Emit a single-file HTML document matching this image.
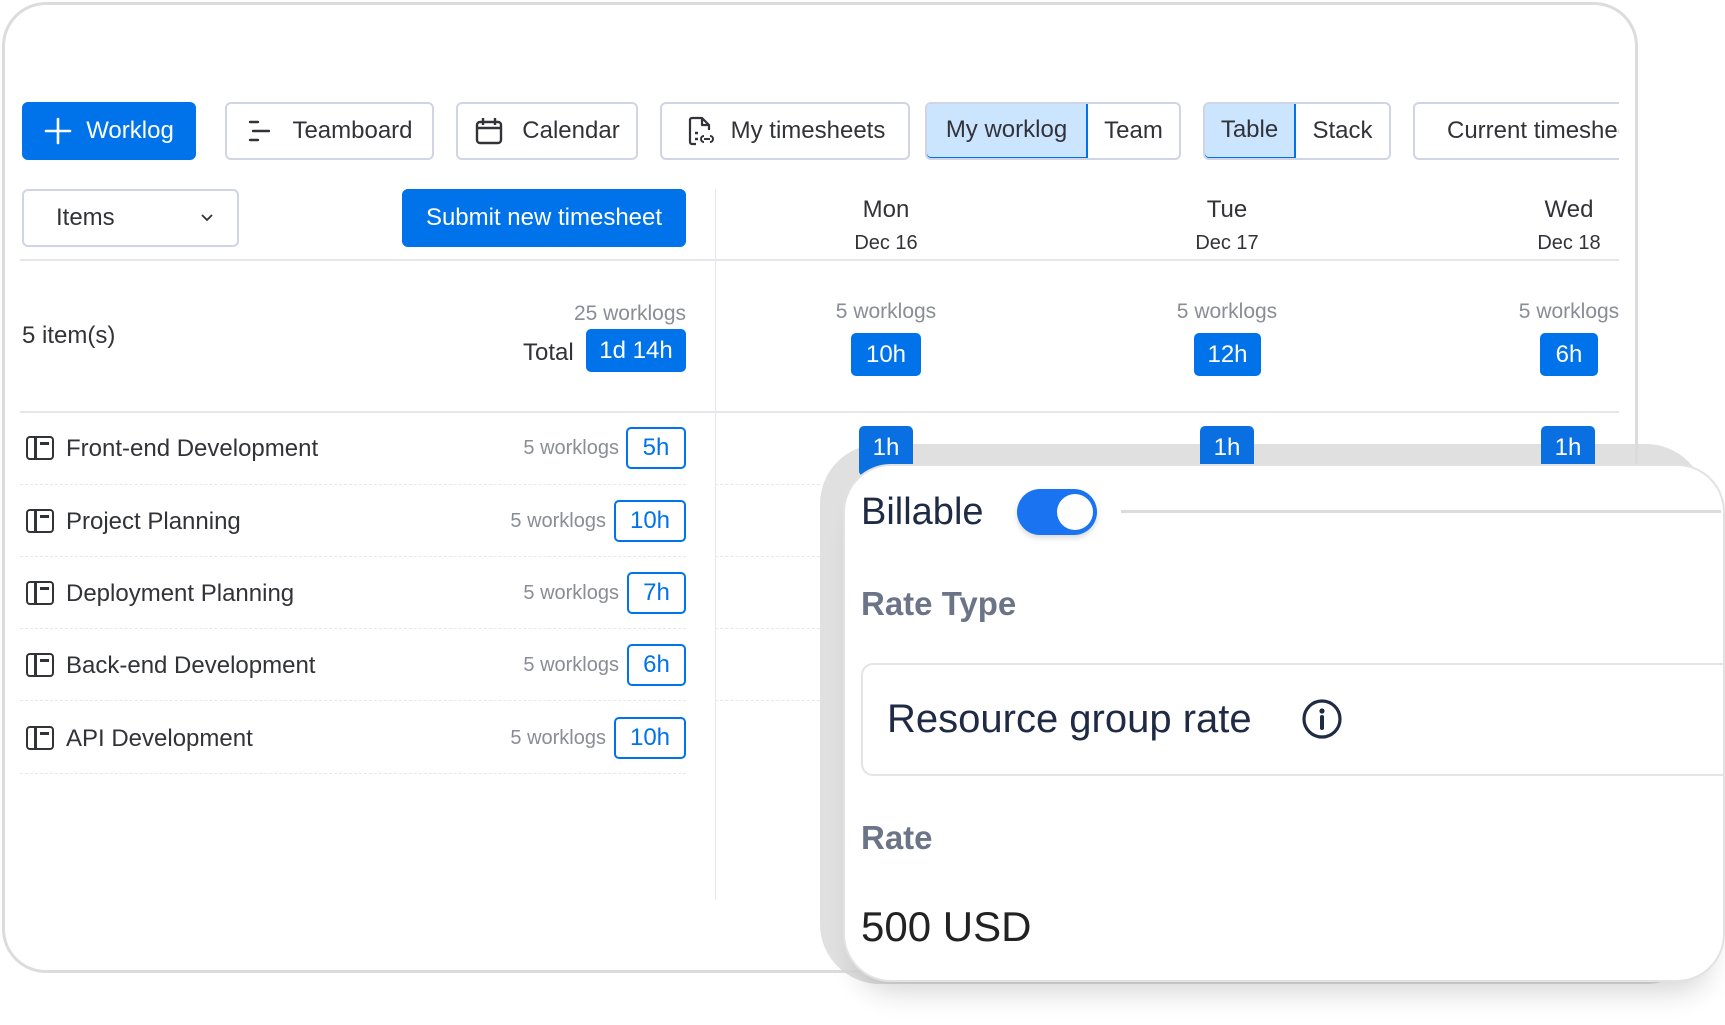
<!DOCTYPE html>
<html><head><meta charset="utf-8">
<style>
*{box-sizing:border-box;margin:0;padding:0}
body{width:1725px;height:1025px;background:#fff;position:relative;overflow:hidden;font-family:"Liberation Sans",sans-serif;color:#323338}
.a{position:absolute}
.card{left:2px;top:2px;width:1636px;height:971px;border:3px solid #dcdcdc;border-radius:44px;background:#fff}
.btn{position:absolute;top:102px;height:58px;border:2px solid #d0d4e4;border-radius:6px;background:#fff;font-size:24px;display:flex;align-items:center;justify-content:center;gap:14px;color:#323338}
.blue{background:#0073ea;border-color:#0073ea;color:#fff}
.sel{background:#cce5ff;border-color:#0073ea}
.t{position:absolute;white-space:nowrap}
.c{transform:translateX(-50%);text-align:center}
.bd{position:absolute;background:#0073ea;color:#fff;border-radius:5px;font-size:24px;display:flex;align-items:center;justify-content:center}
.ob{position:absolute;border:2px solid #0073ea;color:#0073ea;border-radius:5px;font-size:24px;display:flex;align-items:center;justify-content:center;background:#fff;height:42px}
.gray{color:#8a8d96;font-size:20px}
.row{position:absolute;left:20px;width:666px;height:0;border-top:1px dashed #e6e7ec}
.row2{position:absolute;left:715px;width:105px;height:0;border-top:1px dashed #e6e7ec}
.name{position:absolute;left:66px;font-size:24px}
.ico{position:absolute;left:26px;width:28px;height:24px;border:2.5px solid #323338;border-radius:4px}
.ico:before{content:"";position:absolute;left:6px;top:0;bottom:0;width:2.5px;background:#323338}
.ico:after{content:"";position:absolute;left:12px;top:4px;width:9px;height:3px;background:#323338}
</style></head><body>
<div class="a card"></div>

<div class="btn blue" style="left:22px;width:174px"><svg width="28" height="28" viewBox="0 0 28 28"><path d="M14 2v24M2 14h24" stroke="#fff" stroke-width="2.6" stroke-linecap="round"/></svg>Worklog</div>
<div class="btn" style="left:225px;width:209px"><svg width="26" height="26" viewBox="0 0 26 26"><path d="M4 4h8M7 13h16M4 22h8" stroke="#323338" stroke-width="2.4" stroke-linecap="round"/></svg><span style="margin-left:6px">Teamboard</span></div>
<div class="btn" style="left:456px;width:182px"><svg width="30" height="30" viewBox="0 0 30 30"><rect x="3" y="6" width="24" height="21" rx="3" fill="none" stroke="#323338" stroke-width="2.4"/><path d="M3 12h24M9 2v7M21 2v7" stroke="#323338" stroke-width="2.4"/></svg><span style="margin-left:4px">Calendar</span></div>
<div class="btn" style="left:660px;width:250px"><svg width="32" height="32" viewBox="0 0 32 32"><path d="M17 3H7a2 2 0 0 0-2 2v22a2 2 0 0 0 2 2h4M17 3l7 7h-7z M24 10v5" fill="none" stroke="#323338" stroke-width="2.2" stroke-linejoin="round"/><path d="M10 18h3M10 24h3" stroke="#323338" stroke-width="2.4"/><path d="M19 21a3 3 0 0 0 0 6M25 21a3 3 0 0 1 0 6M19 24h6" fill="none" stroke="#323338" stroke-width="2"/></svg>My timesheets</div>
<div class="btn" style="left:925px;width:256px;padding:0;justify-content:flex-start;gap:0;overflow:hidden">
 <div class="sel" style="width:163px;height:58px;margin:-2px 0 0 -2px;border:2px solid #0073ea;border-radius:6px 0 0 6px;display:flex;align-items:center;justify-content:center">My worklog</div>
 <div style="flex:1;text-align:center">Team</div></div>
<div class="btn" style="left:1203px;width:188px;padding:0;justify-content:flex-start;gap:0;overflow:hidden">
 <div class="sel" style="width:93px;height:58px;margin:-2px 0 0 -2px;border:2px solid #0073ea;border-radius:6px 0 0 6px;display:flex;align-items:center;justify-content:center">Table</div>
 <div style="flex:1;text-align:center">Stack</div></div>
<div class="btn" style="left:1413px;width:206px;justify-content:flex-start;padding-left:32px;border-right:none;border-radius:6px 0 0 6px;overflow:hidden;white-space:nowrap">Current timesheet</div>

<div class="btn" style="left:22px;top:189px;width:217px;justify-content:space-between;padding:0 22px 0 32px">Items<svg width="16" height="10" viewBox="0 0 16 10"><path d="M3 2l5 5 5-5" fill="none" stroke="#323338" stroke-width="1.8"/></svg></div>
<div class="btn blue" style="left:402px;top:189px;width:284px">Submit new timesheet</div>

<div class="a" style="left:715px;top:189px;width:1px;height:711px;background:#e6e7ec"></div>
<div class="a" style="left:20px;top:259px;width:1599px;height:2px;background:#e6e7ec"></div>
<div class="a" style="left:20px;top:411px;width:1599px;height:2px;background:#e6e7ec"></div>

<div class="t c" style="left:886px;top:196px;font-size:24px">Mon</div>
<div class="t c" style="left:886px;top:232px;font-size:20px">Dec 16</div>
<div class="t c" style="left:1227px;top:196px;font-size:24px">Tue</div>
<div class="t c" style="left:1227px;top:232px;font-size:20px">Dec 17</div>
<div class="t c" style="left:1569px;top:196px;font-size:24px">Wed</div>
<div class="t c" style="left:1569px;top:232px;font-size:20px">Dec 18</div>

<div class="t" style="left:22px;top:322px;font-size:24px">5 item(s)</div>
<div class="t gray" style="right:1039px;top:302px;font-size:21px">25 worklogs</div>
<div class="t" style="left:523px;top:339px;font-size:24px">Total</div>
<div class="bd" style="left:586px;top:329px;width:100px;height:43px">1d 14h</div>

<div class="t c gray" style="left:886px;top:300px;font-size:21px">5 worklogs</div>
<div class="bd" style="left:851px;top:333px;width:70px;height:43px">10h</div>
<div class="t c gray" style="left:1227px;top:300px;font-size:21px">5 worklogs</div>
<div class="bd" style="left:1194px;top:333px;width:67px;height:43px">12h</div>
<div class="t c gray" style="left:1569px;top:300px;font-size:21px">5 worklogs</div>
<div class="bd" style="left:1540px;top:333px;width:58px;height:43px">6h</div>

<div class="ico" style="top:436px"></div><div class="name" style="top:435px">Front-end Development</div>
<div class="t gray" style="right:1106px;top:437px">5 worklogs</div><div class="ob" style="left:626px;top:427px;width:60px">5h</div>
<div class="row" style="top:484px"></div>
<div class="ico" style="top:509px"></div><div class="name" style="top:508px">Project Planning</div>
<div class="t gray" style="right:1119px;top:510px">5 worklogs</div><div class="ob" style="left:614px;top:500px;width:72px">10h</div>
<div class="row" style="top:556px"></div>
<div class="ico" style="top:581px"></div><div class="name" style="top:580px">Deployment Planning</div>
<div class="t gray" style="right:1106px;top:582px">5 worklogs</div><div class="ob" style="left:627px;top:572px;width:59px">7h</div>
<div class="row" style="top:628px"></div>
<div class="ico" style="top:653px"></div><div class="name" style="top:652px">Back-end Development</div>
<div class="t gray" style="right:1106px;top:654px">5 worklogs</div><div class="ob" style="left:627px;top:644px;width:59px">6h</div>
<div class="row" style="top:700px"></div>
<div class="ico" style="top:726px"></div><div class="name" style="top:725px">API Development</div>
<div class="t gray" style="right:1119px;top:727px">5 worklogs</div><div class="ob" style="left:614px;top:717px;width:72px">10h</div>
<div class="row" style="top:773px"></div>
<div class="row2" style="top:484px"></div><div class="row2" style="top:556px"></div><div class="row2" style="top:628px"></div><div class="row2" style="top:700px"></div>

<!-- popup -->
<div class="a" style="left:820px;top:444px;width:886px;height:540px;background:rgba(218,218,218,.85);border-radius:60px"></div>
<div class="bd" style="left:859px;top:426px;width:54px;height:50px;align-items:flex-start;padding-top:8px;background:#0a6fe0">1h</div>
<div class="bd" style="left:1200px;top:426px;width:54px;height:50px;align-items:flex-start;padding-top:8px;background:#0a6fe0">1h</div>
<div class="bd" style="left:1541px;top:426px;width:54px;height:50px;align-items:flex-start;padding-top:8px;background:#0a6fe0">1h</div>
<div class="a" style="left:843px;top:464px;width:882px;height:518px;background:#fff;border:2px solid #e2e2e2;border-radius:48px;box-shadow:0 24px 30px -16px rgba(0,0,0,.18)"></div>
<div class="t" style="left:861px;top:491px;font-size:38px;color:#1f2a44">Billable</div>
<div class="a" style="left:1017px;top:489px;width:80px;height:46px;border-radius:23px;background:#1a73f0;box-shadow:0 3px 6px rgba(0,0,0,.15)"></div>
<div class="a" style="left:1057px;top:494px;width:36px;height:36px;border-radius:50%;background:#fff"></div>
<div class="a" style="left:1121px;top:510px;width:600px;height:3px;background:#dcdcdc"></div>
<div class="t" style="left:861px;top:585px;font-size:33px;font-weight:bold;color:#6b7587">Rate Type</div>
<div class="a" style="left:861px;top:663px;width:900px;height:113px;border:2px solid #e4e4e4;border-radius:12px"></div>
<div class="t" style="left:887px;top:697px;font-size:40px;color:#1f2a44">Resource group rate</div>
<svg class="a" style="left:1301px;top:698px" width="42" height="42" viewBox="0 0 42 42"><circle cx="21" cy="21" r="18" fill="none" stroke="#1f2a44" stroke-width="3.2"/><circle cx="21" cy="13" r="2.6" fill="#1f2a44"/><path d="M21 19v11" stroke="#1f2a44" stroke-width="4" stroke-linecap="round"/></svg>
<div class="t" style="left:861px;top:819px;font-size:33px;font-weight:bold;color:#6b7587">Rate</div>
<div class="t" style="left:861px;top:903px;font-size:42px;color:#222">500 USD</div>
</body></html>
